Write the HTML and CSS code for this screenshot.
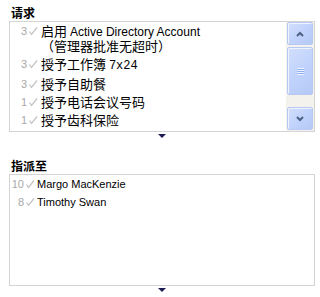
FILE: index.html
```html
<!DOCTYPE html>
<html lang="zh">
<head>
    <meta charset="UTF-8">
    <meta name="viewport" content="width=device-width, initial-scale=1.0">
    <title>请求</title>
    <link rel="stylesheet" href="styles.css">
</head>
<body>
    <div class="section">
        <h2 class="title">请求</h2>
        <div class="box box-scroll">
            <ul class="items items-wide">
                <li><span class="num">3</span><svg class="chk" viewBox="0 0 10 10"><path d="M1.5 5.5 L3.5 8.5 L9 1.5"/></svg><span class="txt">启用 <span class="lat">Active Directory Account</span><br>（管理器批准无超时）</span></li>
                <li><span class="num">3</span><svg class="chk" viewBox="0 0 10 10"><path d="M1.5 5.5 L3.5 8.5 L9 1.5"/></svg><span class="txt">授予工作簿 <span class="mono">7x24</span></span></li>
                <li><span class="num">3</span><svg class="chk" viewBox="0 0 10 10"><path d="M1.5 5.5 L3.5 8.5 L9 1.5"/></svg><span class="txt">授予自助餐</span></li>
                <li><span class="num">1</span><svg class="chk" viewBox="0 0 10 10"><path d="M1.5 5.5 L3.5 8.5 L9 1.5"/></svg><span class="txt">授予电话会议号码</span></li>
                <li><span class="num">1</span><svg class="chk" viewBox="0 0 10 10"><path d="M1.5 5.5 L3.5 8.5 L9 1.5"/></svg><span class="txt">授予齿科保险</span></li>
                <li><span class="num">2</span><svg class="chk" viewBox="0 0 10 10"><path d="M1.5 5.5 L3.5 8.5 L9 1.5"/></svg><span class="txt">授予远程访问权限</span></li>
            </ul>
            <div class="scrollbar">
                <div class="sb-btn">
                    <svg viewBox="0 0 8 6"><path d="M1 5 L4 2 L7 5"/></svg>
                </div>
                <div class="sb-thumb">
                    <span class="grip"></span>
                </div>
                <div class="sb-track"></div>
                <div class="sb-btn">
                    <svg viewBox="0 0 8 6"><path d="M1 1 L4 4 L7 1"/></svg>
                </div>
            </div>
        </div>
        <div class="more"></div>
    </div>

    <div class="section section-second">
        <h2 class="title">指派至</h2>
        <div class="box box-plain">
            <ul class="items">
                <li><span class="num">10</span><svg class="chk" viewBox="0 0 10 10"><path d="M1.5 5.5 L3.5 8.5 L9 1.5"/></svg><span class="txt">Margo MacKenzie</span></li>
                <li><span class="num">8</span><svg class="chk" viewBox="0 0 10 10"><path d="M1.5 5.5 L3.5 8.5 L9 1.5"/></svg><span class="txt">Timothy Swan</span></li>
            </ul>
        </div>
        <div class="more"></div>
    </div>
</body>
</html>
```

FILE: styles.css
```css
body {
    margin: 0;
    background: #fff;
    font-family: "Liberation Sans", "Noto Sans CJK SC", sans-serif;
    color: #000;
}

.section {
    width: 306px;
    margin-left: 9px;
}

.section-second {
    margin-top: 21px;
}

.title {
    margin: 6px 0 1px 2px;
    font-family: "Noto Sans CJK SC", sans-serif;
    font-size: 12px;
    line-height: 14px;
    font-weight: bold;
}

.section-second .title {
    margin-top: 0;
}

.box {
    box-sizing: border-box;
    border: 1px solid #d4d4d4;
    background: #fff;
    overflow: hidden;
}

.box-scroll {
    height: 111px;
    display: flex;
}

.box-plain {
    height: 112px;
}

.items {
    list-style: none;
    margin: 0;
    padding: 0;
    flex: 1;
    overflow: hidden;
}

.items li {
    display: flex;
    align-items: flex-start;
    padding: 2px 0;
    font-size: 11px;
    line-height: 14px;
}

.num {
    width: 14px;
    flex: none;
    text-align: right;
    color: #a8a8a8;
}

.chk {
    width: 10px;
    height: 10px;
    flex: none;
    margin: 2px 0 0 1px;
}

.chk path {
    fill: none;
    stroke: #c4c4c4;
    stroke-width: 1.3;
}

.txt {
    margin-left: 2px;
}

.items-wide .num {
    width: 17px;
}

.items-wide .txt {
    margin-left: 3px;
    font-family: "Noto Sans CJK SC", sans-serif;
    font-size: 13px;
}

.lat {
    font-family: "Liberation Sans", sans-serif;
    font-size: 12px;
}

.mono {
    font-family: "Liberation Mono", monospace;
    font-size: 12px;
}

.scrollbar {
    width: 28px;
    flex: none;
    box-sizing: border-box;
    padding: 0 1px 1px 1px;
    display: flex;
    flex-direction: column;
    background: #f3f2ec;
}

.sb-btn,
.sb-thumb {
    box-sizing: border-box;
    border: 1px solid #b7c8f2;
    border-radius: 2px;
    background: linear-gradient(135deg, #d2defc 0%, #c1d3fb 50%, #b5c9f7 100%);
    box-shadow: inset 1px 1px 0 #eef3ff;
    display: flex;
    align-items: center;
    justify-content: center;
}

.sb-btn {
    height: 23px;
}

.sb-btn svg {
    width: 8px;
    height: 6px;
}

.sb-btn path {
    fill: none;
    stroke: #4d6185;
    stroke-width: 2;
}

.sb-thumb {
    height: 48px;
    margin-top: 2px;
}

.grip {
    width: 7px;
    height: 7px;
    background: repeating-linear-gradient(to bottom, #eef3ff 0, #eef3ff 1px, #8eaef0 1px, #8eaef0 2px);
}

.sb-track {
    flex: 1;
}

.more {
    width: 0;
    height: 0;
    margin: 2px auto 0;
    border-left: 4px solid transparent;
    border-right: 4px solid transparent;
    border-top: 4px solid #1c1c52;
}
```
